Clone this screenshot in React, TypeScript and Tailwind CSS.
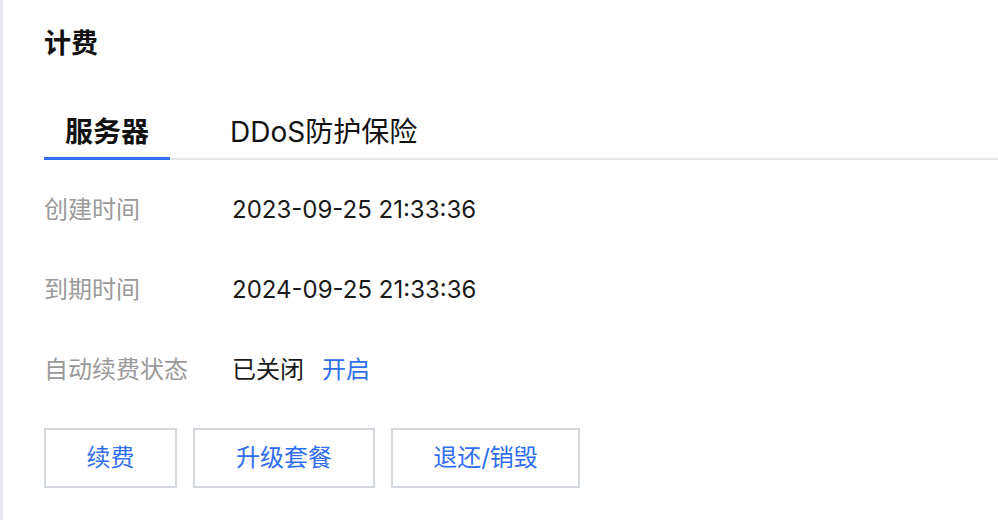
const font = "font-['Inter','Noto_Sans_CJK_SC',sans-serif]";

const rows = [
  { label: "创建时间", value: "2023-09-25 21:33:36" },
  { label: "到期时间", value: "2024-09-25 21:33:36" },
];

const buttons = [
  { text: "续费", w: "w-[133px]" },
  { text: "升级套餐", w: "w-[182px]" },
  { text: "退还/销毁", w: "w-[189px]" },
];

export default function App() {
  return (
    <div className={`h-[520px] w-[998px] overflow-hidden bg-white border-l-[3px] border-[#e6e7ec] ${font}`}>
      <div className="pl-[41px] pt-[28px]">
        <h1 className="text-[27px] font-bold leading-[32px] text-[#111]">计费</h1>

        {/* tabs */}
        <div className="mt-[54px] flex border-b-2 border-[#e6e7ec]">
          <div className="relative w-[126px] text-center text-[28px] font-bold leading-[36px] pb-[8px] text-[#111]">
            服务器
            <div className="absolute bottom-[-2px] left-0 right-0 h-[3px] bg-[#2f6ef0]" />
          </div>
          <div className="ml-[60px] text-[28px] leading-[36px] pb-[8px] text-[#111]">DDoS防护保险</div>
        </div>

        {/* info rows */}
        <div className="mt-[34px] flex flex-col gap-[48px]">
          {rows.map((r) => (
            <div key={r.label} className="flex items-center h-[32px]">
              <span className="w-[188px] text-[24px] text-[#9a9a9a]">{r.label}</span>
              <span className="text-[24px] text-[#1a1a1a]">{r.value}</span>
            </div>
          ))}
          <div className="flex items-center h-[32px]">
            <span className="w-[188px] text-[24px] text-[#9a9a9a]">自动续费状态</span>
            <span className="text-[24px] text-[#1a1a1a]">已关闭</span>
            <span className="ml-[18px] text-[24px] text-[#2f6ef0]">开启</span>
          </div>
        </div>

        {/* actions */}
        <div className="mt-[42px] flex gap-[16px]">
          {buttons.map((b) => (
            <button
              key={b.text}
              className={`${b.w} h-[60px] border-2 border-[#d3d7de] bg-white text-[24px] text-[#2f6ef0]`}
            >
              {b.text}
            </button>
          ))}
        </div>
      </div>
    </div>
  );
}
